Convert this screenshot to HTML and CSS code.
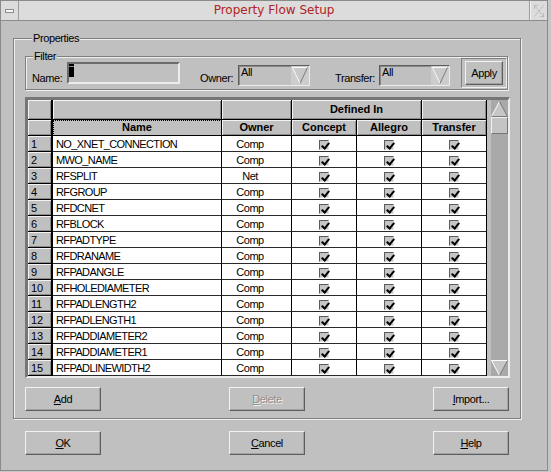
FILE: index.html
```html
<!DOCTYPE html>
<html>
<head>
<meta charset="utf-8">
<title>Property Flow Setup</title>
<link rel="stylesheet" href="styles.css">
</head>
<body>
<div class="window">
  <div class="titlebar">
    <div class="tb-btn tb-min"><span class="min-bar"></span></div>
    <div class="tb-title">Property Flow Setup</div>
    <div class="tb-btn tb-max">
      <svg width="12" height="14" viewBox="0 0 12 14"><path d="M1.5 1.5h4M1.5 1.5v4M1.5 1.5l9 11M10.5 12.5h-4M10.5 12.5v-4M10.5 1.5l-9 11" stroke="#a2a2a2" stroke-width="1" stroke-dasharray="1 1" fill="none"/></svg>
    </div>
  </div>
  <div class="content">
    <div class="group props">
      <div class="group-label">Properties</div>
      <div class="group filter">
        <div class="group-label">Filter</div>
        <div class="filter-row">
          <span class="lbl lbl-name">Name:</span>
          <div class="field name-field"><span class="cursor"></span></div>
          <span class="lbl lbl-owner">Owner:</span>
          <div class="combo owner-combo">
            <span class="combo-text">All</span>
            <span class="combo-btn"><svg width="18" height="19" viewBox="0 0 18 19"><polygon points="1.5,1.5 16.5,1.5 9,17.5" fill="#c9c9c9"/><path d="M1.5 1.5H16.5M1.5 1.5L9 17.5" stroke="#fafafa" fill="none"/><path d="M16.5 1.5L9 17.5" stroke="#7a7a7a" fill="none"/></svg></span>
          </div>
          <span class="lbl lbl-transfer">Transfer:</span>
          <div class="combo transfer-combo">
            <span class="combo-text">All</span>
            <span class="combo-btn"><svg width="18" height="19" viewBox="0 0 18 19"><polygon points="1.5,1.5 16.5,1.5 9,17.5" fill="#c9c9c9"/><path d="M1.5 1.5H16.5M1.5 1.5L9 17.5" stroke="#fafafa" fill="none"/><path d="M16.5 1.5L9 17.5" stroke="#7a7a7a" fill="none"/></svg></span>
          </div>
          <div class="default-frame"><div class="btn apply">Apply</div></div>
        </div>
      </div>

      <div class="table-frame">
        <div class="grid">
          <div class="row head1">
            <div class="c h num"></div>
            <div class="c h"></div>
            <div class="c h"></div>
            <div class="c h">Defined In</div>
            <div class="c h"></div>
          </div>
          <div class="row head2">
            <div class="c h num"></div>
            <div class="c h focus">Name</div>
            <div class="c h">Owner</div>
            <div class="c h">Concept</div>
            <div class="c h">Allegro</div>
            <div class="c h">Transfer</div>
          </div>
          <div class="row"><div class="c num">1</div><div class="c name">NO_XNET_CONNECTION</div><div class="c owner">Comp</div><div class="c chk"><span class="cb"></span></div><div class="c chk"><span class="cb"></span></div><div class="c chk"><span class="cb"></span></div></div>
          <div class="row"><div class="c num">2</div><div class="c name">MWO_NAME</div><div class="c owner">Comp</div><div class="c chk"><span class="cb"></span></div><div class="c chk"><span class="cb"></span></div><div class="c chk"><span class="cb"></span></div></div>
          <div class="row"><div class="c num">3</div><div class="c name">RFSPLIT</div><div class="c owner">Net</div><div class="c chk"><span class="cb"></span></div><div class="c chk"><span class="cb"></span></div><div class="c chk"><span class="cb"></span></div></div>
          <div class="row"><div class="c num">4</div><div class="c name">RFGROUP</div><div class="c owner">Comp</div><div class="c chk"><span class="cb"></span></div><div class="c chk"><span class="cb"></span></div><div class="c chk"><span class="cb"></span></div></div>
          <div class="row"><div class="c num">5</div><div class="c name">RFDCNET</div><div class="c owner">Comp</div><div class="c chk"><span class="cb"></span></div><div class="c chk"><span class="cb"></span></div><div class="c chk"><span class="cb"></span></div></div>
          <div class="row"><div class="c num">6</div><div class="c name">RFBLOCK</div><div class="c owner">Comp</div><div class="c chk"><span class="cb"></span></div><div class="c chk"><span class="cb"></span></div><div class="c chk"><span class="cb"></span></div></div>
          <div class="row"><div class="c num">7</div><div class="c name">RFPADTYPE</div><div class="c owner">Comp</div><div class="c chk"><span class="cb"></span></div><div class="c chk"><span class="cb"></span></div><div class="c chk"><span class="cb"></span></div></div>
          <div class="row"><div class="c num">8</div><div class="c name">RFDRANAME</div><div class="c owner">Comp</div><div class="c chk"><span class="cb"></span></div><div class="c chk"><span class="cb"></span></div><div class="c chk"><span class="cb"></span></div></div>
          <div class="row"><div class="c num">9</div><div class="c name">RFPADANGLE</div><div class="c owner">Comp</div><div class="c chk"><span class="cb"></span></div><div class="c chk"><span class="cb"></span></div><div class="c chk"><span class="cb"></span></div></div>
          <div class="row"><div class="c num">10</div><div class="c name">RFHOLEDIAMETER</div><div class="c owner">Comp</div><div class="c chk"><span class="cb"></span></div><div class="c chk"><span class="cb"></span></div><div class="c chk"><span class="cb"></span></div></div>
          <div class="row"><div class="c num">11</div><div class="c name">RFPADLENGTH2</div><div class="c owner">Comp</div><div class="c chk"><span class="cb"></span></div><div class="c chk"><span class="cb"></span></div><div class="c chk"><span class="cb"></span></div></div>
          <div class="row"><div class="c num">12</div><div class="c name">RFPADLENGTH1</div><div class="c owner">Comp</div><div class="c chk"><span class="cb"></span></div><div class="c chk"><span class="cb"></span></div><div class="c chk"><span class="cb"></span></div></div>
          <div class="row"><div class="c num">13</div><div class="c name">RFPADDIAMETER2</div><div class="c owner">Comp</div><div class="c chk"><span class="cb"></span></div><div class="c chk"><span class="cb"></span></div><div class="c chk"><span class="cb"></span></div></div>
          <div class="row"><div class="c num">14</div><div class="c name">RFPADDIAMETER1</div><div class="c owner">Comp</div><div class="c chk"><span class="cb"></span></div><div class="c chk"><span class="cb"></span></div><div class="c chk"><span class="cb"></span></div></div>
          <div class="row"><div class="c num">15</div><div class="c name">RFPADLINEWIDTH2</div><div class="c owner">Comp</div><div class="c chk"><span class="cb"></span></div><div class="c chk"><span class="cb"></span></div><div class="c chk"><span class="cb"></span></div></div>
        </div>
        <div class="scrollbar">
          <div class="sb-up"><svg width="17" height="16" viewBox="0 0 17 16"><polygon points="0.5,15.5 16.5,15.5 8.5,0.5" fill="#c6c6c6"/><path d="M0.5 15.5L8.5 0.5" stroke="#fafafa" fill="none"/><path d="M8.5 0.5L16.5 15.5H0.5" stroke="#7a7a7a" fill="none"/></svg></div>
          <div class="thumb"></div>
          <div class="sb-space"></div>
          <div class="sb-down"><svg width="17" height="16" viewBox="0 0 17 16"><polygon points="0.5,0.5 16.5,0.5 8.5,15.5" fill="#c6c6c6"/><path d="M0.5 0.5H16.5M0.5 0.5L8.5 15.5" stroke="#fafafa" fill="none"/><path d="M16.5 0.5L8.5 15.5" stroke="#7a7a7a" fill="none"/></svg></div>
        </div>
      </div>

      <div class="btn-row">
        <div class="btn"><span><u>A</u>dd</span></div>
        <div class="btn disabled"><span><u>D</u>elete</span></div>
        <div class="btn"><span><u>I</u>mport...</span></div>
      </div>
    </div>

    <div class="btn-row bottom">
      <div class="btn"><span><u>O</u>K</span></div>
      <div class="btn"><span><u>C</u>ancel</span></div>
      <div class="btn"><span><u>H</u>elp</span></div>
    </div>
  </div>
</div>
</body>
</html>
```

FILE: styles.css
```css
* { box-sizing: border-box; }
html, body { margin: 0; padding: 0; }
body {
  width: 551px;
  height: 472px;
  overflow: hidden;
  background: #c6c6c6;
  font-family: "Liberation Sans", Arial, sans-serif;
  font-size: 11px;
  letter-spacing: -0.4px;
  color: #000;
}
.window {
  width: 548px;
  height: 471px;
  border: 1px solid #8a8a8a;
  background: #c0c0c0;
  display: flex;
  flex-direction: column;
}

/* title bar */
.titlebar {
  flex: none;
  display: flex;
  height: 20px;
  background: #dcdcdc;
  border-bottom: 1px solid #8c8c8c;
}
.tb-btn {
  width: 18px;
  display: flex;
  align-items: center;
  justify-content: center;
}
.tb-min { border-right: 1px solid #9c9c9c; }
.tb-max { border-left: 1px solid #9c9c9c; box-shadow: inset 1px 0 0 #f4f4f4; }
.min-bar {
  width: 9px;
  height: 4px;
  background: #f6f6f6;
  border: 1px solid #8e8e8e;
}
.tb-title {
  flex: 1;
  text-align: center;
  font-family: "DejaVu Sans", sans-serif;
  font-size: 12px;
  letter-spacing: 0;
  line-height: 19px;
  color: #b22222;
}

/* content */
.content { padding: 17px 0 0 12px; }
.group {
  border: 1px solid #808080;
  box-shadow: inset 1px 1px 0 #efefef, 1px 1px 0 #efefef;
}
.group-label {
  display: table;
  height: 14px;
  line-height: 14px;
  margin: -8px 0 0 7px;
  padding: 0 1px;
  background: #c0c0c0;
}
.props {
  width: 508px;
  padding: 0 10px 7px 11px;
}
.filter {
  width: 483px;
  margin-top: 11px;
  padding-bottom: 1px;
}
.filter-row {
  display: flex;
  align-items: flex-end;
  height: 30px;
  margin-top: -5px;
}
.lbl { line-height: 13px; margin-bottom: 3px; }
.lbl-name { margin-left: 6px; width: 35px; }
.lbl-owner { margin-left: 20px; width: 38px; }
.lbl-transfer { margin-left: 25px; width: 44px; }

.field {
  width: 113px;
  height: 22px;
  margin-bottom: 4px;
  border: 2px solid;
  border-color: #6c6c6c #ececec #ececec #6c6c6c;
  background: #c0c0c0;
}
.cursor {
  display: block;
  width: 5px;
  height: 13px;
  background: #000;
  box-shadow: inset 0 2px 0 #000, inset 0 3px 0 #888;
}
.combo {
  display: flex;
  height: 21px;
  margin-bottom: 2px;
  border: 1px solid;
  border-color: #5e5e5e #ececec #ececec #5e5e5e;
  box-shadow: inset 1px 1px 0 #8a8a8a;
  background: #c0c0c0;
}
.owner-combo { width: 72px; }
.transfer-combo { width: 71px; }
.combo-text {
  flex: 1;
  line-height: 11px;
  padding: 1px 0 0 2px;
}
.combo-btn {
  width: 18px;
  background: #cdcdcd;
  display: flex;
}
.default-frame {
  width: 46px;
  height: 30px;
  margin-left: 11px;
  border: 1px solid;
  border-color: #808080 #efefef #efefef #808080;
  display: flex;
  align-items: center;
  justify-content: center;
}

/* buttons */
.btn {
  width: 76px;
  height: 24px;
  display: flex;
  align-items: center;
  justify-content: center;
  background: #c0c0c0;
  border: 1px solid;
  border-color: #f2f2f2 #5e5e5e #5e5e5e #f2f2f2;
  box-shadow: inset -1px -1px 0 #a2a2a2;
  line-height: 13px;
}
.btn.apply { width: 38px; }
.btn u { text-decoration: underline; text-underline-offset: 1px; }
.btn.disabled { color: #8e8e8e; text-shadow: 1px 1px 0 #f2f2f2; }
.btn-row {
  display: flex;
  justify-content: space-between;
  width: 484px;
  margin-top: 9px;
}
.btn-row.bottom { margin: 12px 0 0 12px; }

/* table */
.table-frame {
  display: flex;
  width: 485px;
  height: 281px;
  margin-top: 7px;
  border-style: solid;
  border-width: 3px 2px 2px 3px;
  border-color: #767676 #ececec #ececec #767676;
  background: #c0c0c0;
}
.grid { width: 459px; }
.row {
  display: grid;
  grid-template-columns: 25px 169px 70px 65px 65px 65px;
  height: 16px;
}
.head1 {
  height: 20px;
  grid-template-columns: 25px 169px 70px 130px 65px;
}
.c {
  border-right: 1px solid #000;
  border-bottom: 1px solid #2a2a2a;
  background: #fff;
  white-space: nowrap;
  overflow: hidden;
  line-height: 14px;
  padding-top: 1px;
}
.c.h, .c.num {
  background: #c0c0c0;
  box-shadow: inset 1px 1px 0 #f2f2f2, inset -1px -1px 0 #8a8a8a;
  border-bottom-color: #000;
}
.c.num {
  border-right: 2px solid #000;
  padding-left: 3px;
  letter-spacing: -0.2px;
}
.c.h {
  font-weight: bold;
  letter-spacing: 0;
  text-align: center;
  line-height: 15px;
  padding-top: 0;
}
.head1 .c.h { line-height: 19px; }
.c.h.focus {
  box-shadow: none;
  outline: 1px dotted #000;
  outline-offset: -1px;
}
.c.name { padding-left: 3px; letter-spacing: -0.6px; }
.c.owner { text-align: center; padding-right: 13px; letter-spacing: -0.5px; }
.c.chk {
  display: flex;
  justify-content: center;
  align-items: flex-end;
  padding: 0 0 1px 0;
}
.cb {
  position: relative;
  display: block;
  width: 10px;
  height: 10px;
  background: #c6c6c6;
  border: 1px solid;
  border-color: #5a5a5a #e6e6e6 #e6e6e6 #5a5a5a;
}
.cb::after {
  content: "";
  position: absolute;
  left: 2.5px;
  top: -0.5px;
  width: 3px;
  height: 6px;
  border: solid #000;
  border-width: 0 2px 2px 0;
  transform: rotate(40deg);
}

/* scrollbar */
.scrollbar {
  width: 17px;
  margin-left: 4px;
  background: #a9a9a9;
  display: flex;
  flex-direction: column;
}
.sb-up { height: 17px; padding-top: 1px; }
.sb-up svg, .sb-down svg { display: block; }
.thumb {
  height: 17px;
  background: #c4c4c4;
  border: 1px solid;
  border-color: #f0f0f0 #777 #777 #f0f0f0;
}
.sb-space { flex: 1; }
.sb-down { height: 16px; }
```
